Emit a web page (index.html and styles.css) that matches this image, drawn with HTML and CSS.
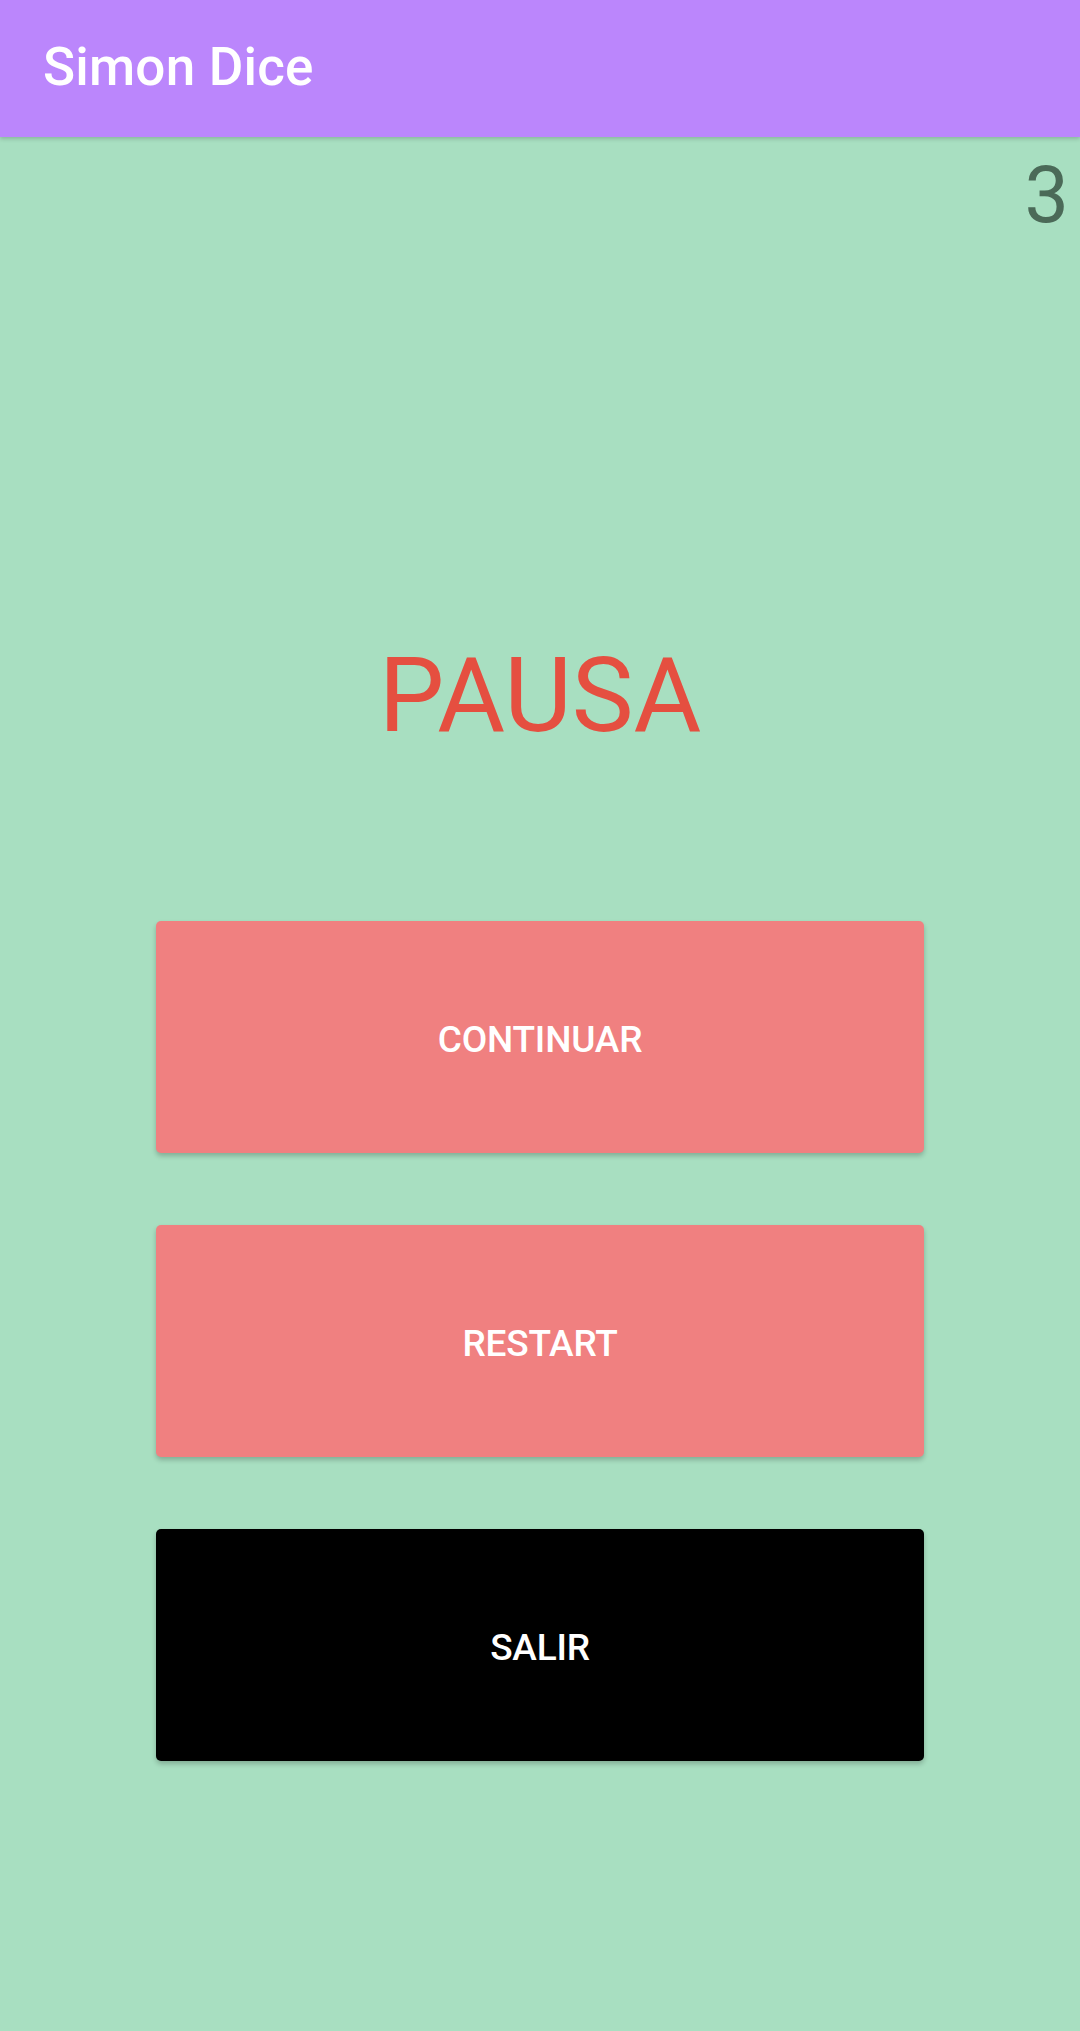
FILE: index.html
```html
<!DOCTYPE html>
<html lang="es">
<head>
<meta charset="utf-8">
<title>Simon Dice</title>
<link rel="stylesheet" href="styles.css">
</head>
<body>
<header class="appbar">
  <h1 class="appbar-title">Simon Dice</h1>
</header>
<main class="content">
  <div class="score">3</div>
  <div class="pause-title">PAUSA</div>
  <div class="buttons">
    <button class="btn btn-pink">CONTINUAR</button>
    <button class="btn btn-pink">RESTART</button>
    <button class="btn btn-black">SALIR</button>
  </div>
</main>
</body>
</html>
```

FILE: styles.css
```css
html, body {
  margin: 0;
  padding: 0;
}
body {
  width: 1080px;
  height: 2031px;
  background: #a8dfc1;
  font-family: Roboto, "Noto Sans", sans-serif;
  overflow: hidden;
}
.appbar {
  position: relative;
  z-index: 1;
  height: 137px;
  box-sizing: border-box;
  padding: 41px 0 0 43px;
  background: #bb86fc;
  box-shadow: 0 2px 4px rgba(0, 0, 0, 0.18);
}
.appbar-title {
  margin: 0;
  font-size: 53px;
  line-height: 1;
  font-weight: 500;
  color: #ffffff;
  letter-spacing: 0.2px;
}
.content {
  display: flex;
  flex-direction: column;
}
.score {
  align-self: flex-end;
  padding: 19px 11px 0 0;
  font-size: 79px;
  line-height: 1;
  color: #4b6a58;
}
.pause-title {
  margin-top: 409px;
  text-align: center;
  font-size: 104px;
  line-height: 1;
  color: #e54f40;
}
.buttons {
  margin-top: 173px;
  display: flex;
  flex-direction: column;
  align-items: center;
  gap: 72px;
}
.btn {
  width: 768px;
  height: 232px;
  border: none;
  border-radius: 5px;
  font-family: Roboto, "Noto Sans", sans-serif;
  font-size: 37px;
  font-weight: 500;
  letter-spacing: -0.2px;
  color: #ffffff;
  box-shadow: 0 3px 5px rgba(0, 0, 0, 0.22);
  padding: 4px 0 0;
}
.btn-pink {
  background: #f08080;
}
.btn-black {
  background: #000000;
}
```
